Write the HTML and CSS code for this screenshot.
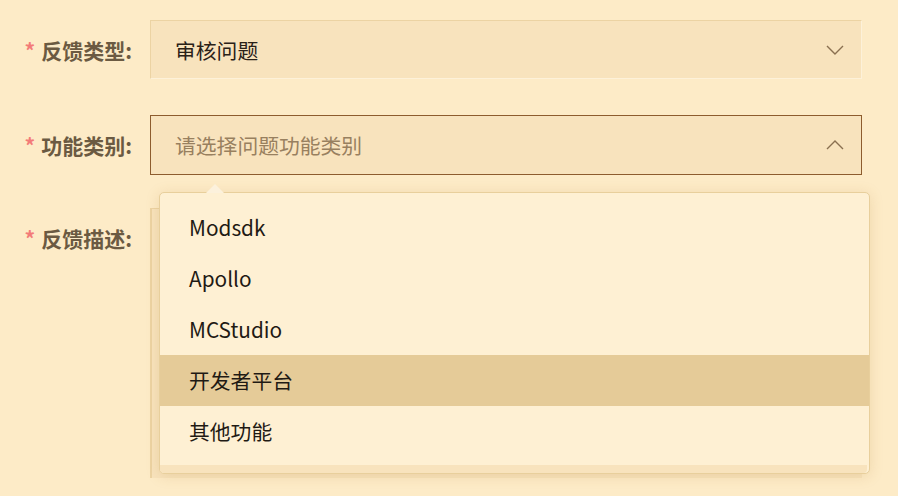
FILE: index.html
```html
<!DOCTYPE html>
<html lang="zh">
<head>
<meta charset="utf-8">
<link rel="stylesheet" href="styles.css">
</head>
<body>
<form class="form">
  <div class="row">
    <label class="label"><span class="req">*</span>反馈类型:</label>
    <div class="select select-filled">
      <span class="value">审核问题</span>
      <svg class="chev" width="18" height="10" viewBox="0 0 18 10"><path d="M1 1 L9 9 L17 1" fill="none" stroke="#8a7050" stroke-width="1.4"/></svg>
    </div>
  </div>
  <div class="row">
    <label class="label"><span class="req">*</span>功能类别:</label>
    <div class="select select-open">
      <span class="placeholder">请选择问题功能类别</span>
      <svg class="chev" width="18" height="10" viewBox="0 0 18 10"><path d="M1 9 L9 1 L17 9" fill="none" stroke="#8a7050" stroke-width="1.4"/></svg>
    </div>
  </div>
  <div class="row row-area">
    <label class="label"><span class="req">*</span>反馈描述:</label>
    <div class="textarea"></div>
  </div>
</form>
<div class="dropdown">
  <div class="arrow"></div>
  <ul class="options">
    <li class="opt">Modsdk</li>
    <li class="opt">Apollo</li>
    <li class="opt">MCStudio</li>
    <li class="opt hover">开发者平台</li>
    <li class="opt">其他功能</li>
  </ul>
  <div class="track"></div>
</div>
</body>
</html>
```
FILE: styles.css
```css
html, body {
  margin: 0;
  padding: 0;
}
body {
  background: #fdebc7;
  width: 898px;
  height: 496px;
  overflow: hidden;
  font-family: "Noto Sans CJK SC", "Noto Sans", sans-serif;
  position: relative;
}
.form {
  padding-top: 20px;
  display: flex;
  flex-direction: column;
  gap: 36px;
}
.row {
  display: flex;
  align-items: center;
}
.row-area {
  align-items: flex-start;
  margin-top: -3px;
}
.label {
  width: 132px;
  flex: none;
  padding-right: 18px;
  box-sizing: content-box;
  text-align: right;
  font-size: 21px;
  font-weight: 700;
  color: #6b5a42;
  white-space: nowrap;
}
.label .req {
  color: #f37b78;
  margin-right: 6px;
  font-size: 21px;
}
.row-area .label {
  padding-top: 15px;
}
.select {
  box-sizing: border-box;
  width: 712px;
  height: 60px;
  display: flex;
  align-items: center;
  justify-content: space-between;
  padding: 0 17px 0 24px;
  background: #f8e3bd;
  font-size: 20.8px;
}
.select-filled {
  border-top: 1px solid #ecd3a3;
  border-left: 1px solid #ecd3a3;
  border-bottom: 1px solid #fdf1d9;
  border-right: 1px solid #fdf1d9;
  height: 59px;
}
.select-open {
  border: 1px solid #8d5c2e;
}
.value {
  color: #2a2118;
}
.placeholder {
  color: #98805f;
}
.chev {
  display: block;
}
.textarea {
  box-sizing: border-box;
  width: 712px;
  height: 270px;
  background: #f8e3bd;
  border-left: 2px solid #ecd3a3;
  border-top: 1px solid #ecd3a3;
}
.dropdown {
  position: absolute;
  left: 159px;
  top: 192px;
  width: 711px;
  height: 282px;
  box-sizing: border-box;
  background: #fef0d3;
  border: 1px solid #e8cf9c;
  border-radius: 5px;
  box-shadow: 0 2px 14px rgba(170, 120, 40, 0.18);
}
.arrow {
  position: absolute;
  left: 46px;
  top: -9px;
  width: 0;
  height: 0;
  border-left: 9px solid transparent;
  border-right: 9px solid transparent;
  border-bottom: 9px solid #fcf1dc;
}
.options {
  list-style: none;
  margin: 0;
  padding: 9px 0 0;
}
.opt {
  height: 51px;
  line-height: 51px;
  padding-left: 29px;
  font-size: 20.8px;
  color: #1f1a14;
}
.opt.hover {
  background: #e5cb98;
}
.track {
  position: absolute;
  left: 0;
  right: 2px;
  bottom: 0;
  height: 8px;
  background: #f8e3bd;
  border-radius: 0 0 4px 4px;
}
```
